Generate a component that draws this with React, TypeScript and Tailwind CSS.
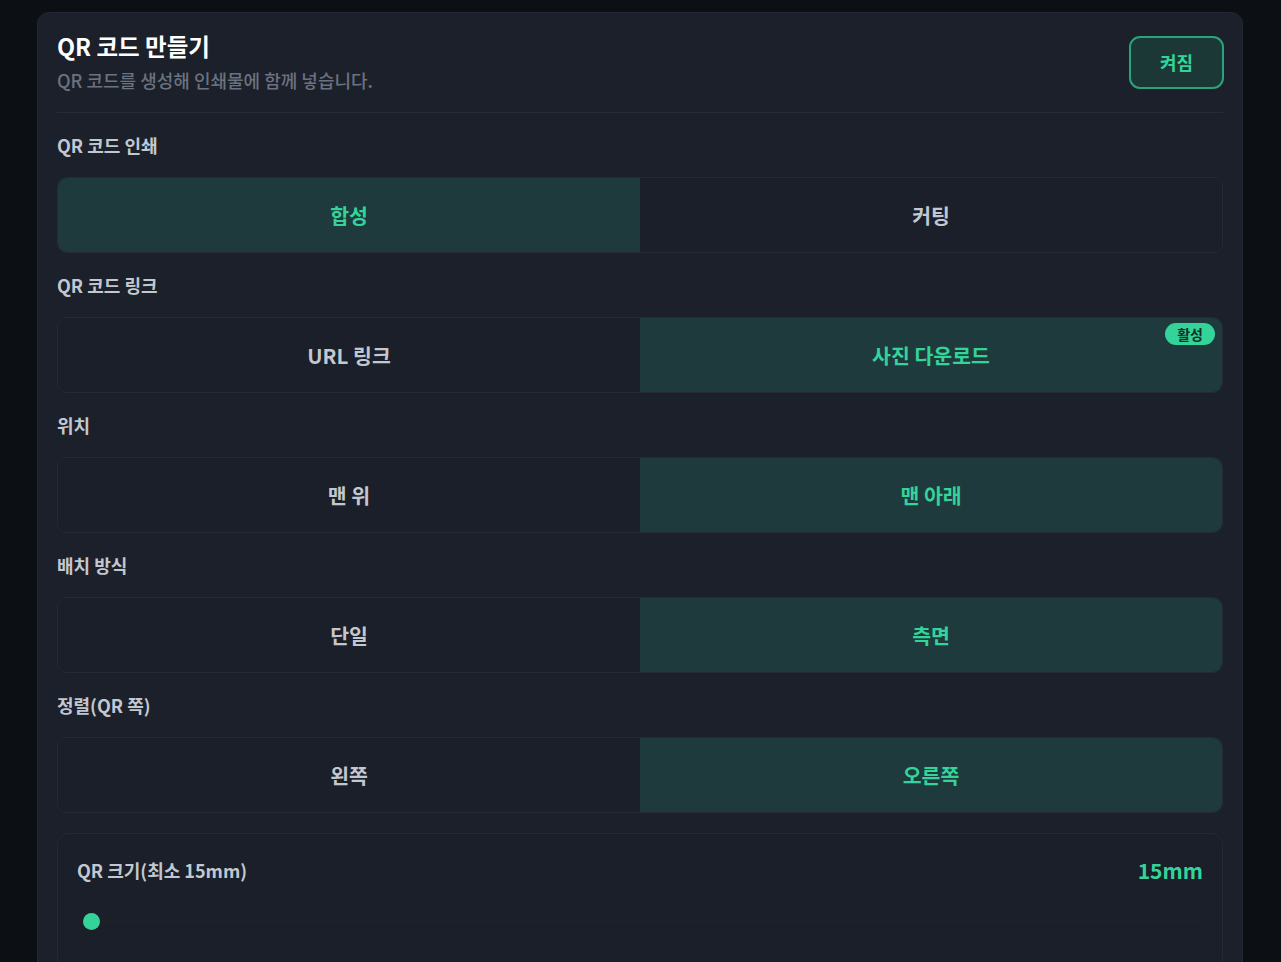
import React, { useState } from 'react';

type Option = { value: string; label: string };

interface SegmentProps {
  title: string;
  options: Option[];
  value: string;
  onChange: (v: string) => void;
  badge?: string;
}

const Segment: React.FC<SegmentProps> = ({ title, options, value, onChange, badge }) => {
  return (
    <div className="flex flex-col gap-5">
      <div className="text-[18px] leading-6 font-semibold text-[#c3c8d0]">{title}</div>
      <div className="grid grid-cols-2 h-[76px] rounded-[10px] border border-[#252b36] overflow-hidden">
        {options.map((opt) => {
          const active = opt.value === value;
          return (
            <button
              key={opt.value}
              type="button"
              onClick={() => onChange(opt.value)}
              className={
                active
                  ? 'relative bg-[#1e3a3c] text-[#34d399] text-[20.5px] font-bold'
                  : 'relative bg-[#1a1f29] text-[#c3c8d0] text-[20.5px] font-bold'
              }
            >
              {opt.label}
              {active && badge && (
                <span className="absolute top-[5px] right-[7px] px-3 h-[22px] flex items-center rounded-full bg-[#34d399] text-[#10302a] text-[14px] font-bold">
                  {badge}
                </span>
              )}
            </button>
          );
        })}
      </div>
    </div>
  );
};

export default function App() {
  const [print, setPrint] = useState('compose');
  const [link, setLink] = useState('photo');
  const [pos, setPos] = useState('bottom');
  const [layout, setLayout] = useState('side');
  const [align, setAlign] = useState('right');
  const [enabled, setEnabled] = useState(true);

  return (
    <div
      className="min-h-screen bg-[#0c0f14] pt-3 pl-[37px] pr-[38px]"
      style={{ fontFamily: '"Noto Sans CJK KR", "Noto Sans", sans-serif' }}
    >
      <div className="bg-[#1b202a] border border-[#222834] rounded-xl px-[19px] pt-[19px] pb-8">
        <div className="flex items-center justify-between pb-5 border-b border-[#262c37]">
          <div>
            <h2 className="text-[23.5px] leading-7 font-bold text-white">QR 코드 만들기</h2>
            <p className="mt-2 text-[18px] leading-6 font-medium text-[#6b7280]">QR 코드를 생성해 인쇄물에 함께 넣습니다.</p>
          </div>
          <button
            type="button"
            onClick={() => setEnabled(!enabled)}
            className="w-[95px] h-[53px] mr-[-1px] rounded-[11px] border-2 border-[#2aa27c] bg-[#1b3836] text-[#34d399] text-[18px] font-bold"
          >
            {enabled ? '켜짐' : '꺼짐'}
          </button>
        </div>

        <div className="flex flex-col gap-5 mt-5">
          <Segment
            title="QR 코드 인쇄"
            options={[
              { value: 'compose', label: '합성' },
              { value: 'cut', label: '커팅' },
            ]}
            value={print}
            onChange={setPrint}
          />
          <Segment
            title="QR 코드 링크"
            options={[
              { value: 'url', label: 'URL 링크' },
              { value: 'photo', label: '사진 다운로드' },
            ]}
            value={link}
            onChange={setLink}
            badge="활성"
          />
          <Segment
            title="위치"
            options={[
              { value: 'top', label: '맨 위' },
              { value: 'bottom', label: '맨 아래' },
            ]}
            value={pos}
            onChange={setPos}
          />
          <Segment
            title="배치 방식"
            options={[
              { value: 'single', label: '단일' },
              { value: 'side', label: '측면' },
            ]}
            value={layout}
            onChange={setLayout}
          />
          <Segment
            title="정렬(QR 쪽)"
            options={[
              { value: 'left', label: '왼쪽' },
              { value: 'right', label: '오른쪽' },
            ]}
            value={align}
            onChange={setAlign}
          />
        </div>

        <div className="mt-5 rounded-xl border border-[#242a35] bg-[#1a1f29] px-[19px] pt-6 pb-10">
          <div className="flex items-center justify-between">
            <span className="text-[18px] leading-6 font-semibold text-[#c3c8d0]">QR 크기(최소 15mm)</span>
            <span className="text-[21px] leading-6 font-bold text-[#34d399]">15mm</span>
          </div>
          <div className="relative mt-[31px] h-4 flex items-center">
            <div className="w-full h-[6px] rounded-full bg-[#1b2029]" />
            <div className="absolute left-[6px] w-[17px] h-[17px] rounded-full bg-[#34d399]" />
          </div>
        </div>
      </div>
    </div>
  );
}
